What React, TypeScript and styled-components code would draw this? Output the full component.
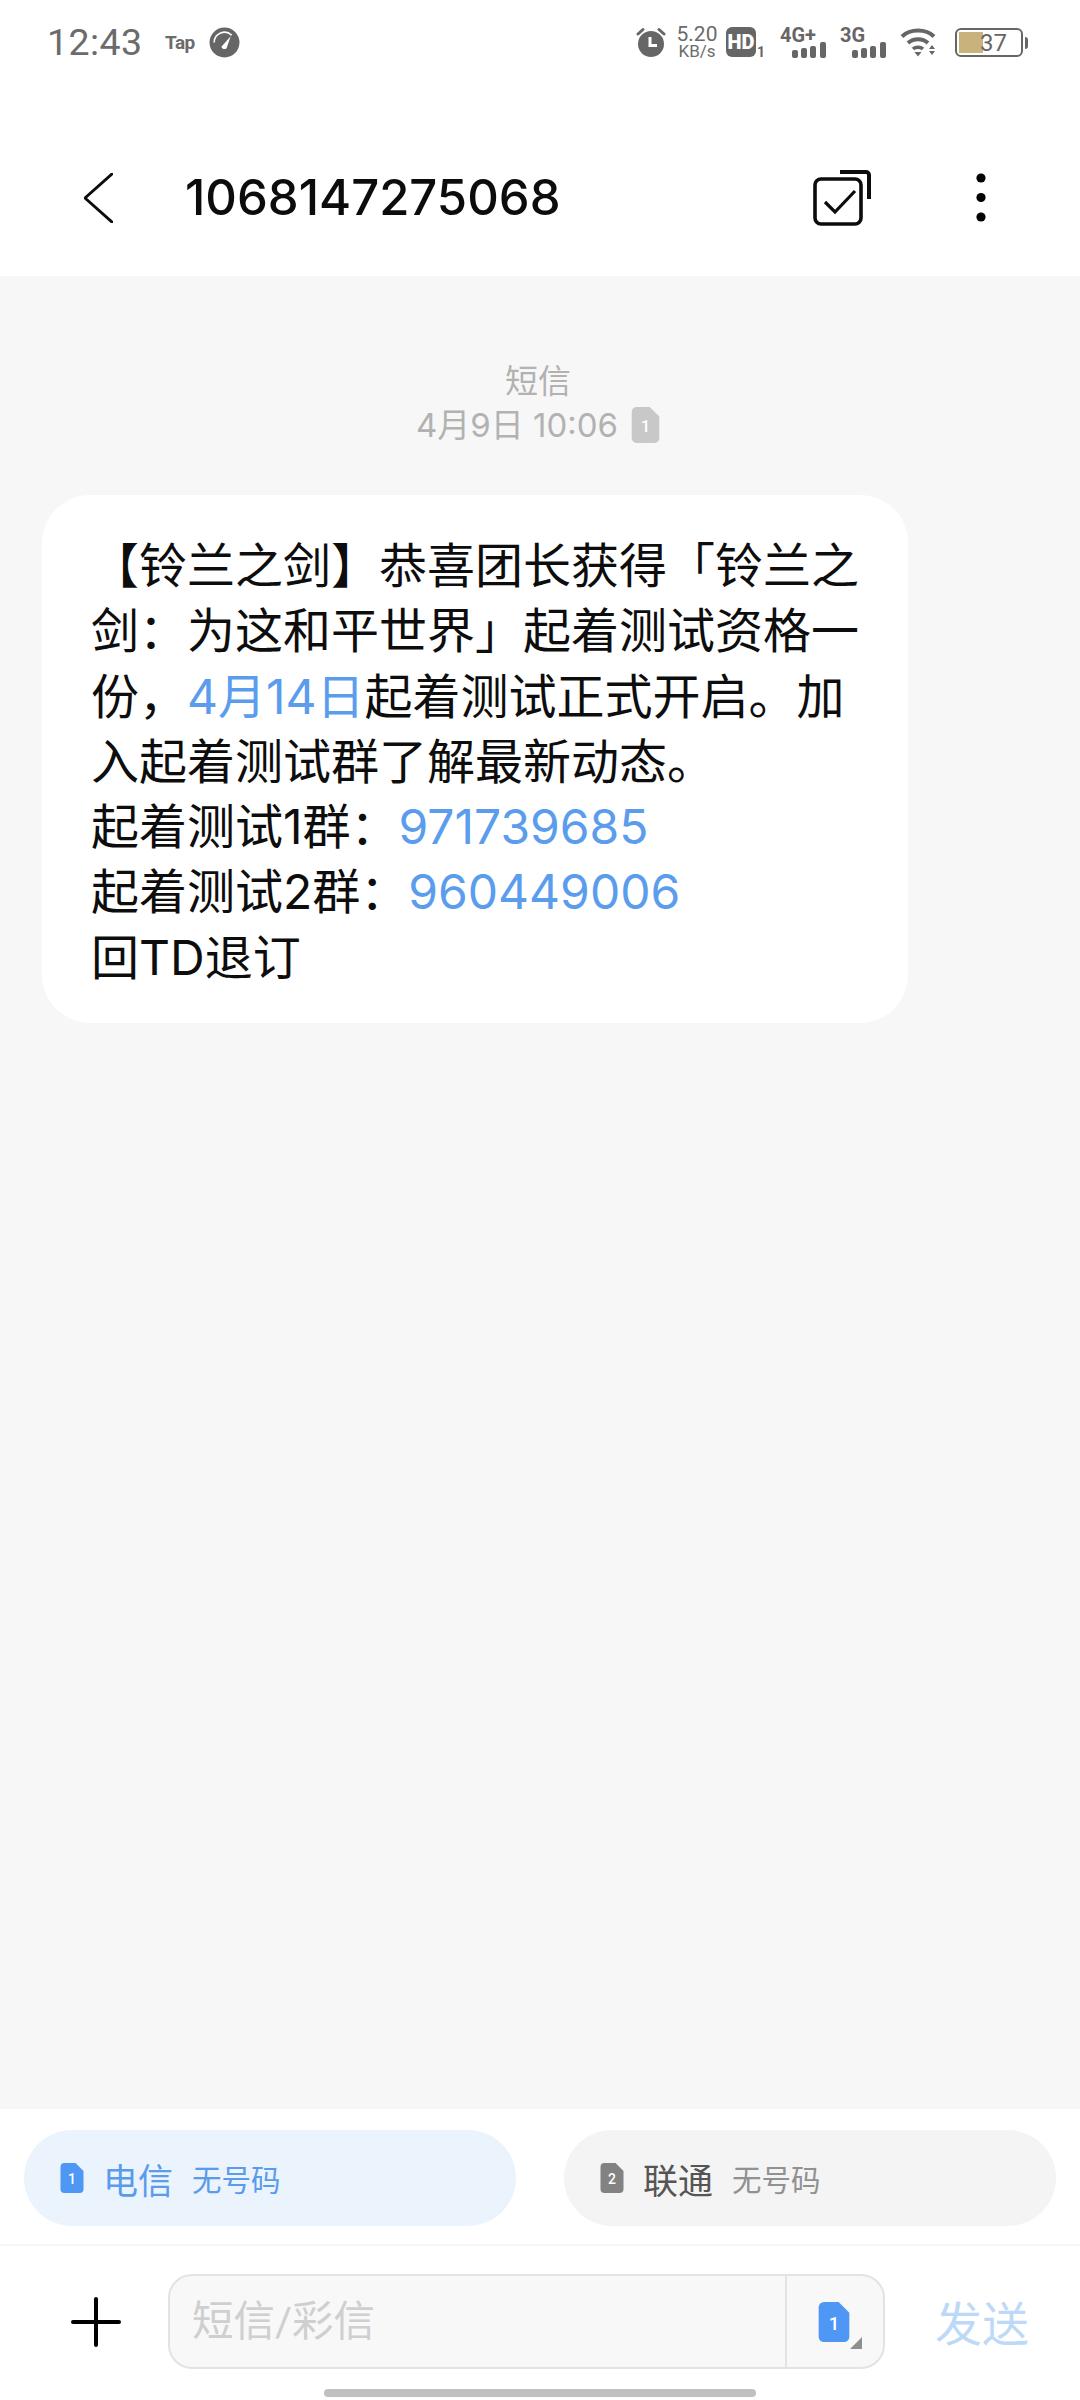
import React from "react";
import styled, { createGlobalStyle } from "styled-components";

const GlobalStyle = createGlobalStyle`
  html, body {
    margin: 0;
    padding: 0;
    background: #ffffff;
  }
  body {
    font-family: Roboto, "Noto Sans CJK SC", sans-serif;
  }
`;

const contentFont = `Inter, "Noto Sans CJK SC", sans-serif`;

const Page = styled.div`
  width: 1080px;
  height: 2400px;
  display: flex;
  flex-direction: column;
  background: #ffffff;
  overflow: hidden;
`;

const StatusBar = styled.div`
  height: 84px;
  display: flex;
  align-items: center;
  padding: 0 57px 0 47px;
  color: #6b6b6b;
`;

const Clock = styled.span`
  font-size: 37.5px;
  width: 118px;
  letter-spacing: 0.4px;
`;

const TapMark = styled.span`
  font-size: 19px;
  font-weight: 700;
  letter-spacing: -0.5px;
  width: 44px;
`;

const StatusIcons = styled.div`
  margin-left: auto;
  display: flex;
  align-items: center;
`;

const Speed = styled.div`
  width: 40px;
  margin: 0 9px 0 11px;
  display: flex;
  flex-direction: column;
  align-items: center;
  font-size: 21px;
  line-height: 19px;

  small {
    font-size: 17px;
    line-height: 15px;
  }
`;

const Battery = styled.div`
  position: relative;
  width: 68px;
  height: 29px;
  margin-left: 17px;
  padding-left: 9px;
  box-sizing: border-box;
  border: 2px solid #666666;
  border-radius: 6px;
  font-size: 24px;
  line-height: 26px;
  text-align: center;
  color: #666666;

  &::before {
    content: "";
    position: absolute;
    left: 2px;
    top: 2px;
    bottom: 2px;
    width: 24px;
    background: #c9b27c;
  }

  &::after {
    content: "";
    position: absolute;
    right: -7px;
    top: 7px;
    width: 3px;
    height: 12px;
    background: #666666;
    border-radius: 0 3px 3px 0;
  }

  span {
    position: relative;
  }
`;

const Header = styled.header`
  height: 156px;
  padding: 36px 94px 0 84px;
  display: flex;
  align-items: center;
`;

const Title = styled.h1`
  flex: 1;
  margin: 0 0 2px 72px;
  font-family: ${contentFont};
  font-size: 49px;
  font-weight: 500;
  color: #0c0c0c;
`;

const DotsIcon = styled.svg`
  margin-left: 105px;
`;

const Thread = styled.main`
  flex: 1;
  background: #f7f7f7;
  padding: 83px 172px 0 42px;
  display: flex;
  flex-direction: column;
  align-items: flex-start;
`;

const Meta = styled.div`
  width: 992px;
  display: flex;
  justify-content: center;
  align-items: center;
  gap: 13px;
  font-family: ${contentFont};
  font-size: 33px;
  line-height: 44px;
  color: #b2b2b2;
`;

const Bubble = styled.div`
  width: 866px;
  box-sizing: border-box;
  margin-top: 48px;
  padding: 38px 45px 33px 49px;
  background: #ffffff;
  border-radius: 48px;
  font-family: ${contentFont};
  font-size: 48px;
  line-height: 65.3px;
  color: #0d0d0d;
  text-spacing-trim: space-all;
`;

const Link = styled.span`
  color: #5b9dec;
`;

const Footer = styled.footer`
  background: #ffffff;
  padding-bottom: 3px;
`;

const SimRow = styled.div`
  display: flex;
  justify-content: space-between;
  padding: 21px 24px 18px;
  border-bottom: 2px solid #f6f6f6;
`;

const SimChip = styled.div<{ $active?: boolean }>`
  width: 492px;
  height: 96px;
  box-sizing: border-box;
  padding-left: 36px;
  display: flex;
  align-items: center;
  border-radius: 48px;
  background: ${(p) => (p.$active ? "#ebf3fd" : "#f4f4f4")};
`;

const SimName = styled.span<{ $active?: boolean }>`
  margin-left: 19px;
  font-size: 35px;
  color: ${(p) => (p.$active ? "#5a9bec" : "#555555")};
`;

const SimNumber = styled.span<{ $active?: boolean }>`
  margin-left: 19px;
  font-size: 29.5px;
  color: ${(p) => (p.$active ? "#5a9bec" : "#919191")};
`;

const ComposeRow = styled.div`
  display: flex;
  align-items: center;
  padding: 28px 0 0 71px;
`;

const ComposeBox = styled.div`
  width: 717px;
  height: 95px;
  margin-left: 47px;
  box-sizing: border-box;
  display: flex;
  border: 2px solid #e3e3e3;
  border-radius: 24px;
  background: #f8f8f8;
`;

const Placeholder = styled.div`
  flex: 1;
  padding-left: 22px;
  font-size: 41.5px;
  line-height: 91px;
  color: #cfcfcf;
`;

const SimPicker = styled.div`
  position: relative;
  width: 98px;
  border-left: 2px solid #e3e3e3;
  display: flex;
  align-items: center;
  padding-left: 31px;
  box-sizing: border-box;

  &::after {
    content: "";
    position: absolute;
    right: 21px;
    bottom: 18px;
    border-style: solid;
    border-width: 0 0 12px 12px;
    border-color: transparent transparent #8f8f8f transparent;
  }
`;

const SendLabel = styled.span`
  margin-left: 50px;
  margin-bottom: 2px;
  font-size: 47px;
  color: #bdd9f7;
`;

const HomeBar = styled.div`
  width: 432px;
  height: 8px;
  margin: 20px auto 0;
  border-radius: 4px;
  background: #c0c0c0;
`;

function SimIcon(props: { n: string; w: number; h: number; color: string }) {
  const { n, w, h, color } = props;
  return (
    <svg width={w} height={h} viewBox="0 0 23 30" style={{ flexShrink: 0 }}>
      <path d="M4 0H15L23 8V26a4 4 0 0 1-4 4H4a4 4 0 0 1-4-4V4a4 4 0 0 1 4-4Z" fill={color} />
      <text x="11.5" y="21" fontSize="14" fontWeight="500" fill="#ffffff" textAnchor="middle" fontFamily="Roboto, sans-serif">
        {n}
      </text>
    </svg>
  );
}

function GaugeIcon() {
  return (
    <svg width="31" height="31" viewBox="0 0 30 30">
      <circle cx="15" cy="15" r="14.5" fill="#666666" />
      <path d="M5 15A10 10 0 0 1 22 8" stroke="#ffffff" strokeWidth="1.6" fill="none" />
      <path d="M12 19L21 9L17 20.5A3 3 0 0 1 12 19Z" fill="#ffffff" />
    </svg>
  );
}

function AlarmIcon() {
  return (
    <svg width="30" height="32" viewBox="0 0 30 32">
      <circle cx="15" cy="18" r="13" fill="#666666" />
      <path d="M2 8L7 3.5M28 8L23 3.5" stroke="#666666" strokeWidth="3" strokeLinecap="round" />
      <path d="M14 11V19.5H21" stroke="#ffffff" strokeWidth="3" fill="none" />
    </svg>
  );
}

function HdIcon() {
  return (
    <svg width="40" height="40" viewBox="0 0 40 40">
      <rect x="0" y="5" width="30" height="30" rx="6" fill="#666666" />
      <text x="15" y="27" fontSize="20" fontWeight="900" fill="#ffffff" textAnchor="middle" fontFamily="Roboto, sans-serif">
        HD
      </text>
      <text x="35" y="35" fontSize="14" fontWeight="700" fill="#666666" textAnchor="middle" fontFamily="Roboto, sans-serif">
        1
      </text>
    </svg>
  );
}

function SignalIcon(props: { label: string; gap: number }) {
  return (
    <svg width="48" height="40" viewBox="0 0 48 40" style={{ marginLeft: props.gap }}>
      <text x="0" y="20" fontSize="20" fontWeight="700" fill="#666666" fontFamily="Roboto, sans-serif">
        {props.label}
      </text>
      <rect x="12" y="28" width="6" height="8" rx="2" fill="#666666" />
      <rect x="21" y="26" width="6" height="10" rx="2" fill="#666666" />
      <rect x="30" y="24" width="6" height="12" rx="2" fill="#666666" />
      <rect x="40" y="20" width="6" height="16" rx="2" fill="#666666" />
    </svg>
  );
}

function WifiIcon() {
  return (
    <svg width="38" height="32" viewBox="0 0 38 32" style={{ marginLeft: 12 }}>
      <path d="M2 10.5C10 2.5 26 2.5 34 10.5" stroke="#666666" strokeWidth="4" fill="none" />
      <path d="M8 17C13.5 12 22.5 12 28 17" stroke="#666666" strokeWidth="4" fill="none" />
      <path d="M13 23C15.5 20.5 20.5 20.5 23 23" stroke="#666666" strokeWidth="3.5" fill="none" />
      <path d="M14.5 26H21.5L18 30.5Z" fill="#666666" />
      <path d="M32 19L35 23H29ZM29 25H35L32 29Z" fill="#666666" />
    </svg>
  );
}

function BackIcon() {
  return (
    <svg width="29" height="50" viewBox="0 0 29 50">
      <path d="M28 1L1 25L28 49" stroke="#0c0c0c" strokeWidth="3" fill="none" strokeLinecap="round" strokeLinejoin="round" />
    </svg>
  );
}

function SelectIcon() {
  return (
    <svg width="58" height="56" viewBox="0 0 58 56">
      <path d="M27 2H53a3 3 0 0 1 3 3V29" stroke="#0c0c0c" strokeWidth="4" fill="none" />
      <rect x="2" y="9" width="46" height="45" rx="6" stroke="#0c0c0c" strokeWidth="3.6" fill="none" />
      <path d="M12 32L22 42L42 21" stroke="#0c0c0c" strokeWidth="3.2" fill="none" />
    </svg>
  );
}

function PlusIcon() {
  return (
    <svg width="50" height="50" viewBox="0 0 50 50" style={{ flexShrink: 0 }}>
      <path d="M25 2V48M2 25H48" stroke="#000000" strokeWidth="4" strokeLinecap="round" />
    </svg>
  );
}

export default function App() {
  return (
    <Page>
      <GlobalStyle />
      <StatusBar>
        <Clock>12:43</Clock>
        <TapMark>Tap</TapMark>
        <GaugeIcon />
        <StatusIcons>
          <AlarmIcon />
          <Speed>
            5.20
            <small>KB/s</small>
          </Speed>
          <HdIcon />
          <SignalIcon label="4G+" gap={14} />
          <SignalIcon label="3G" gap={12} />
          <WifiIcon />
          <Battery>
            <span>37</span>
          </Battery>
        </StatusIcons>
      </StatusBar>

      <Header>
        <BackIcon />
        <Title>1068147275068</Title>
        <SelectIcon />
        <DotsIcon width="10" height="50" viewBox="0 0 10 50">
          <circle cx="5" cy="5" r="4.6" fill="#000000" />
          <circle cx="5" cy="24.5" r="4.6" fill="#000000" />
          <circle cx="5" cy="44" r="4.6" fill="#000000" />
        </DotsIcon>
      </Header>

      <Thread>
        <Meta>短信</Meta>
        <Meta>
          <span>4月9日 10:06</span>
          <SimIcon n="1" w={29} h={36} color="#c8c8c8" />
        </Meta>
        <Bubble lang="zh-CN">
          【铃兰之剑】恭喜团长获得「铃兰之剑：为这和平世界」起着测试资格一份，
          <Link>4月14日</Link>起着测试正式开启。加入起着测试群了解最新动态。
          <br />
          起着测试1群：<Link>971739685</Link>
          <br />
          起着测试2群：<Link>960449006</Link>
          <br />
          回TD退订
        </Bubble>
      </Thread>

      <Footer>
        <SimRow>
          <SimChip $active>
            <SimIcon n="1" w={24} h={30} color="#4f97f5" />
            <SimName $active>电信</SimName>
            <SimNumber $active>无号码</SimNumber>
          </SimChip>
          <SimChip>
            <SimIcon n="2" w={24} h={30} color="#828282" />
            <SimName>联通</SimName>
            <SimNumber>无号码</SimNumber>
          </SimChip>
        </SimRow>
        <ComposeRow>
          <PlusIcon />
          <ComposeBox>
            <Placeholder>短信/彩信</Placeholder>
            <SimPicker>
              <SimIcon n="1" w={32} h={40} color="#4f97f5" />
            </SimPicker>
          </ComposeBox>
          <SendLabel>发送</SendLabel>
        </ComposeRow>
        <HomeBar />
      </Footer>
    </Page>
  );
}
